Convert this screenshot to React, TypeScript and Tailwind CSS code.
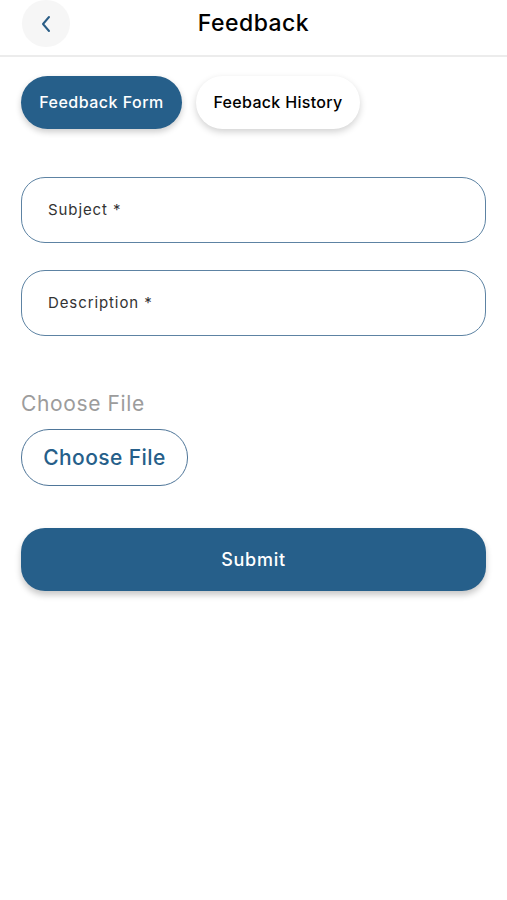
import React from "react";

export default function App() {
  const font = { fontFamily: 'Inter, "Open Sans", sans-serif' };
  return (
    <div className="min-h-[900px] w-full bg-white" style={font}>
      <div className="relative flex h-[57px] items-center justify-center border-b-2 border-[#ececec]">
        <div className="absolute left-[22px] top-0 flex h-[47px] w-[48px] items-center justify-center rounded-full bg-[#f6f6f6]">
          <svg width="14" height="20" viewBox="0 0 14 20" fill="none">
            <path d="M10 3 L4 10 L10 17" stroke="#2a5d86" strokeWidth="2" strokeLinecap="round" strokeLinejoin="round" />
          </svg>
        </div>
        <div className="mb-[8px] text-[23px] font-medium tracking-[0.02em] text-black">Feedback</div>
      </div>

      <div className="flex gap-[14px] px-[21px] pt-[19px]">
        <div className="flex h-[53px] w-[161px] items-center justify-center rounded-full bg-[#265f8a] pb-[1px] text-[16px] font-medium tracking-[0.03em] text-white shadow-[0_3px_6px_rgba(0,0,0,0.2)]">
          Feedback Form
        </div>
        <div className="flex h-[53px] w-[164px] items-center justify-center rounded-full bg-white pb-[1px] text-[16px] font-medium tracking-[0.02em] text-black shadow-[0_3px_7px_rgba(0,0,0,0.18)]">
          Feeback History
        </div>
      </div>

      <div className="flex flex-col gap-[27px] px-[21px] pt-[48px]">
        <div className="flex h-[66px] items-center rounded-[24px] border-[1.5px] border-[#5d83a3] px-[26px] text-[15px] tracking-[0.06em] text-[#333]">
          Subject *
        </div>
        <div className="flex h-[66px] items-center rounded-[24px] border-[1.5px] border-[#5d83a3] px-[26px] text-[15px] tracking-[0.06em] text-[#333]">
          Description *
        </div>
      </div>

      <div className="px-[21px] pt-[53px]">
        <div className="text-[21px] leading-[30px] tracking-[0.03em] text-[#9c9c9c]">Choose File</div>
        <div className="mt-[10px] flex h-[57px] w-[167px] items-center justify-center rounded-[28px] border-[1.5px] border-[#4f7699] text-[21px] font-medium tracking-[0.02em] text-[#265f8a]">
          Choose File
        </div>
        <div className="mt-[42px] flex h-[63px] items-center justify-center rounded-[24px] bg-[#265f8a] text-[18px] font-medium tracking-[0.04em] text-white shadow-[0_4px_6px_rgba(0,0,0,0.22)]">
          Submit
        </div>
      </div>
    </div>
  );
}
